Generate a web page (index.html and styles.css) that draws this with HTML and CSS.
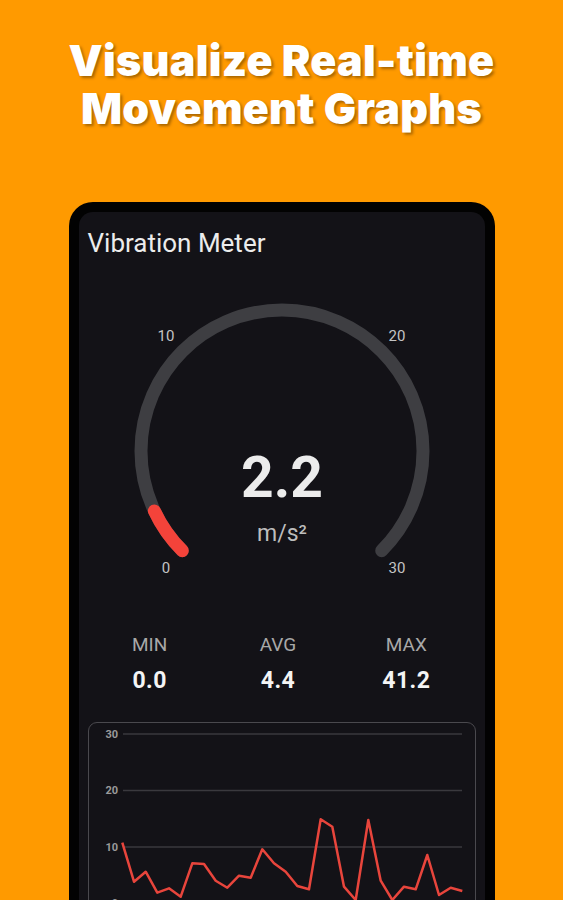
FILE: index.html
```html
<!DOCTYPE html>
<html lang="en">
<head>
  <meta charset="UTF-8" />
  <meta name="viewport" content="width=device-width, initial-scale=1.0" />
  <title>Vibration Meter</title>
  <link rel="stylesheet" href="styles.css">
</head>
<body>
  <h1 class="headline">Visualize Real-time<br>Movement Graphs</h1>

  <div class="phone">
    <div class="screen">
      <div class="app-title">Vibration Meter</div>

      <svg class="gauge" width="406" height="300" viewBox="0 0 406 300">
        <path class="gauge-track" d="M 103.3 260.7 A 141 141 0 1 1 302.7 260.7" />
        <path class="gauge-value" d="M 103.3 260.7 A 141 141 0 0 1 75.4 221.0" />
        <text class="gauge-tick" x="87" y="46">10</text>
        <text class="gauge-tick" x="318" y="46">20</text>
        <text class="gauge-tick" x="87" y="278">0</text>
        <text class="gauge-tick" x="318" y="278">30</text>
        <text class="gauge-number" x="203" y="187">2.2</text>
        <text class="gauge-unit" x="203" y="243">m/s²</text>
      </svg>

      <div class="stats">
        <div class="stat">
          <div class="stat-label">MIN</div>
          <div class="stat-value">0.0</div>
        </div>
        <div class="stat">
          <div class="stat-label">AVG</div>
          <div class="stat-value">4.4</div>
        </div>
        <div class="stat">
          <div class="stat-label">MAX</div>
          <div class="stat-value">41.2</div>
        </div>
      </div>

      <div class="chart">
        <svg class="chart-svg" width="388" height="240" viewBox="0 0 388 240">
          <line class="grid" x1="36" y1="12" x2="375" y2="12" />
          <line class="grid" x1="36" y1="68.5" x2="375" y2="68.5" />
          <line class="grid" x1="36" y1="125" x2="375" y2="125" />
          <line class="grid" x1="36" y1="181.5" x2="375" y2="181.5" />
          <text class="axis" x="31" y="12">30</text>
          <text class="axis" x="31" y="68.5">20</text>
          <text class="axis" x="31" y="125">10</text>
          <text class="axis" x="31" y="181.5">0</text>
          <polyline class="trace" points="35.3,120.7 47,159.7 58.7,149.7 70.3,170.7 82,166.3 93.7,174.7 105.3,141.3 117,142 128.7,158.7 140.3,165.7 152,153.7 163.7,155.7 175.3,127.3 187,141.3 198.7,149.7 210.3,164 222,167.3 233.7,97.3 245.3,104.7 257,164.7 268.7,178 281.3,98 293.7,158.7 305.3,178 317,164.7 328.7,167.3 340.3,133 352,173 363.7,165.7 375.3,169" />
        </svg>
      </div>
    </div>
  </div>
</body>
</html>
```

FILE: styles.css
```css
html, body {
  margin: 0;
  height: 900px;
  overflow: hidden;
}
body {
  background-color: #ff9a00;
  font-family: Roboto, "Noto Sans", Arial, sans-serif;
}
.headline {
  margin: 0;
  padding-top: 36px;
  text-align: center;
  font-family: Inter, "Open Sans", sans-serif;
  font-weight: 900;
  font-size: 43px;
  line-height: 48px;
  color: #fff;
  letter-spacing: 0.3px;
  text-shadow: 2px 2px 3px rgba(0,0,0,0.35);
}
.phone {
  width: 406px;
  height: 760px;
  margin: 70px auto 0;
  padding: 10px;
  background: #020202;
  border-radius: 24px;
}
.screen {
  height: 100%;
  background: #131217;
  border-radius: 14px;
  padding: 16px 9px 0;
  box-sizing: border-box;
}
.app-title {
  font-size: 26px;
  line-height: 30px;
  color: #ececec;
}
.gauge {
  display: block;
  margin: 32px 0 0 -9px;
}
.gauge-track, .gauge-value {
  fill: none;
  stroke-width: 13;
  stroke-linecap: round;
}
.gauge-track {
  stroke: #3e3e42;
}
.gauge-value {
  stroke: #f4433a;
}
.gauge-tick {
  fill: #c4c4c4;
  font-size: 15px;
  text-anchor: middle;
  dominant-baseline: central;
}
.gauge-number {
  fill: #ececec;
  font-size: 57px;
  font-weight: 700;
  text-anchor: middle;
  dominant-baseline: central;
}
.gauge-unit {
  fill: #bdbdbd;
  font-size: 23px;
  text-anchor: middle;
  dominant-baseline: central;
}
.stats {
  display: grid;
  grid-template-columns: repeat(3, 1fr);
  margin: 44px 5px 0 -2px;
  text-align: center;
}
.stat-label {
  font-size: 19px;
  line-height: 22px;
  color: #a8a8a8;
}
.stat-value {
  margin-top: 11px;
  font-size: 23px;
  line-height: 28px;
  font-weight: 700;
  color: #f4f4f4;
  letter-spacing: 0.5px;
}
.chart {
  margin-top: 27px;
  height: 240px;
  border: 1.5px solid #4a494e;
  border-radius: 9px;
  overflow: hidden;
}
.chart-svg {
  display: block;
  margin: -1.5px 0 0 -1.5px;
}
.grid {
  stroke: #3a393e;
  stroke-width: 1.5;
}
.axis {
  fill: #9a9a9a;
  font-size: 11px;
  font-weight: 700;
  text-anchor: end;
  dominant-baseline: central;
}
.trace {
  fill: none;
  stroke: #e8453c;
  stroke-width: 2.5;
  stroke-linejoin: round;
}
```
